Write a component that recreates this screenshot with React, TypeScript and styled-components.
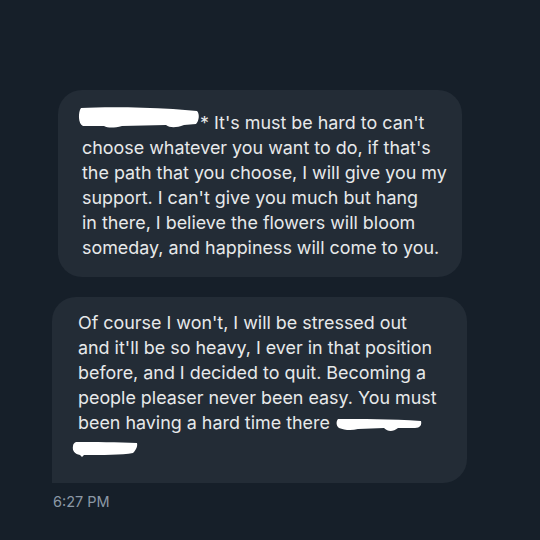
import styled, { createGlobalStyle } from 'styled-components';

const GlobalStyle = createGlobalStyle`
  html, body {
    margin: 0;
    padding: 0;
    background: #161f29;
  }
`;

// 받은 메시지 두 개 + 시간
const Page = styled.div`
  width: 540px;
  height: 540px;
  box-sizing: border-box;
  padding: 90px 0 0 52px;
  display: flex;
  flex-direction: column;
  background: #161f29;
  font-family: Inter, 'Noto Sans', sans-serif;
`;

const Bubble = styled.div<{
  $width: number;
  $indent: number;
  $pad: string;
  $square?: boolean;
}>`
  width: ${(p) => p.$width}px;
  margin-left: ${(p) => p.$indent}px;
  box-sizing: border-box;
  padding: ${(p) => p.$pad};
  background: #232c36;
  border-radius: 24px;
  border-bottom-left-radius: ${(p) => (p.$square ? '0' : '24px')};
  color: #e7e9ea;
  font-size: 17.9px;
  line-height: 25px;
  white-space: nowrap;

  & + & {
    margin-top: 20px;
  }
`;

const Line = styled.div<{ $step?: number }>`
  display: flex;
  align-items: center;
  height: ${(p) => p.$step ?? 25}px;
`;

const Time = styled.div`
  margin-top: 10px;
  padding-left: 1px;
  color: #8b98a5;
  font-size: 14.5px;
  line-height: 18px;
`;

const Blot = styled.svg<{ $w: number; $h: number; $lift: number; $gap: number }>`
  display: block;
  flex: 0 0 auto;
  width: ${(p) => p.$w}px;
  height: ${(p) => p.$h}px;
  margin-left: ${(p) => p.$gap}px;
  transform: translateY(${(p) => -p.$lift}px);
`;

const NameBlot = () => (
  <Blot $w={122} $h={21} $lift={5} $gap={-4} viewBox="0 0 122 21" preserveAspectRatio="none">
    <path
      d="M3 1 C25 0 60 0 95 2 L119 4 C122 7 121 14 118 17 L106 18 C98 21 92 21 88 18 L44 19 C36 21 30 21 26 19 L5 19 C0 17 0 5 3 1 Z"
      fill="#fff"
    />
  </Blot>
);

const TailBlot = () => (
  <Blot $w={86} $h={13} $lift={-3} $gap={6} viewBox="0 0 86 13" preserveAspectRatio="none">
    <path
      d="M2 0 C25 0 55 0 85 2 C86 6 84 9 79 9 L62 9 C57 13 52 13 48 9 L22 10 C15 12 8 11 3 9 C0 7 0 2 2 0 Z"
      fill="#fff"
    />
  </Blot>
);

const LastBlot = () => (
  <Blot $w={66} $h={15} $lift={-2} $gap={-6} viewBox="0 0 66 15" preserveAspectRatio="none">
    <path
      d="M4 0 C22 0 46 0 65 1 C66 5 63 9 61 11 C50 13 30 13 12 13 L10 15 L8 13 C3 12 0 9 1 4 C1 2 2 1 4 0 Z"
      fill="#fff"
    />
  </Blot>
);

const App = () => {
  return (
    <>
      <GlobalStyle />
      <Page>
        <Bubble $width={404} $indent={6} $pad="20px 16px 17px 24px">
          <Line>
            <NameBlot />
            <span>* It's must be hard to can't</span>
          </Line>
          <Line>choose whatever you want to do, if that's</Line>
          <Line>the path that you choose, I will give you my</Line>
          <Line>support. I can't give you much but hang</Line>
          <Line>in there, I believe the flowers will bloom</Line>
          <Line>someday, and happiness will come to you.</Line>
        </Bubble>
        <Bubble $width={415} $indent={0} $pad="13px 16px 23px 26px" $square>
          <Line>Of course I won't, I will be stressed out</Line>
          <Line>and it'll be so heavy, I ever in that position</Line>
          <Line>before, and I decided to quit. Becoming a</Line>
          <Line>people pleaser never been easy. You must</Line>
          <Line>
            <span>been having a hard time there</span>
            <TailBlot />
          </Line>
          <Line>
            <LastBlot />
          </Line>
        </Bubble>
        <Time>6:27 PM</Time>
      </Page>
    </>
  );
};

export default App;
